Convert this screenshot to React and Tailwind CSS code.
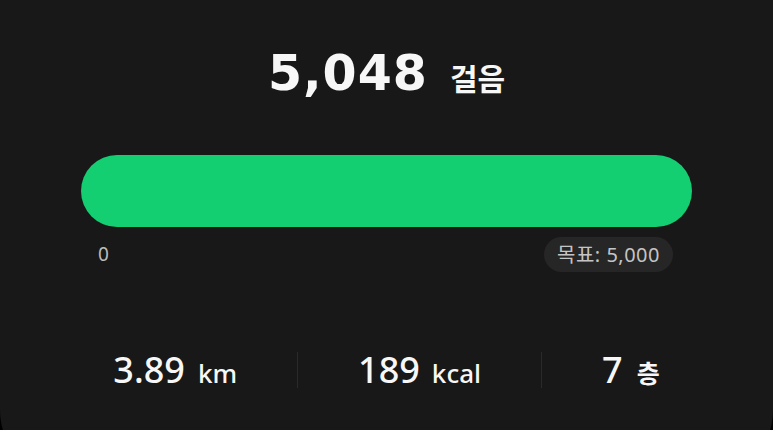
export default function App() {
  const font = { fontFamily: '"Noto Sans", "Noto Sans CJK KR", sans-serif' };

  return (
    <div className="h-[430px] w-[773px] overflow-hidden bg-black" style={font}>
      <div className="flex h-[480px] flex-col rounded-b-[70px] bg-[#181818] px-[81px]">
        {/* Step count */}
        <div className="mt-[49px] flex items-baseline justify-center gap-[22px] text-[#f7f7f7]">
          <span className="font-['DejaVu_Sans',sans-serif] text-[49px] font-bold leading-none tracking-[1px]">
            5,048
          </span>
          <span className="text-[30px] font-bold leading-none">걸음</span>
        </div>

        {/* Progress bar */}
        <div className="mt-[57px] h-[72px] w-full rounded-full bg-[#14cf72]" />

        {/* Scale */}
        <div className="mt-[10px] flex items-center justify-between pl-[17px] pr-[19px]">
          <span className="text-[19px] text-[#bcbcbc]">0</span>
          <span className="flex h-[35px] items-center rounded-full bg-[#262626] px-[13px] text-[20px] tracking-[0.5px] text-[#c4c4c4]">
            목표: 5,000
          </span>
        </div>

        {/* Stats */}
        <div className="mt-[80px] flex items-center justify-center gap-[60px] text-[#f7f7f7]">
          <div className="flex items-baseline gap-[13px]">
            <span className="text-[36px] font-medium leading-none">3.89</span>
            <span className="text-[26px] font-medium leading-none">km</span>
          </div>
          <div className="h-[36px] w-px bg-[#2a2a2a]" />
          <div className="flex items-baseline gap-[12px]">
            <span className="text-[36px] font-medium leading-none">189</span>
            <span className="text-[26px] font-medium leading-none">kcal</span>
          </div>
          <div className="h-[36px] w-px bg-[#2a2a2a]" />
          <div className="flex items-baseline gap-[14px]">
            <span className="text-[36px] font-medium leading-none">7</span>
            <span className="text-[25px] font-bold leading-none">층</span>
          </div>
        </div>
      </div>
    </div>
  );
}
